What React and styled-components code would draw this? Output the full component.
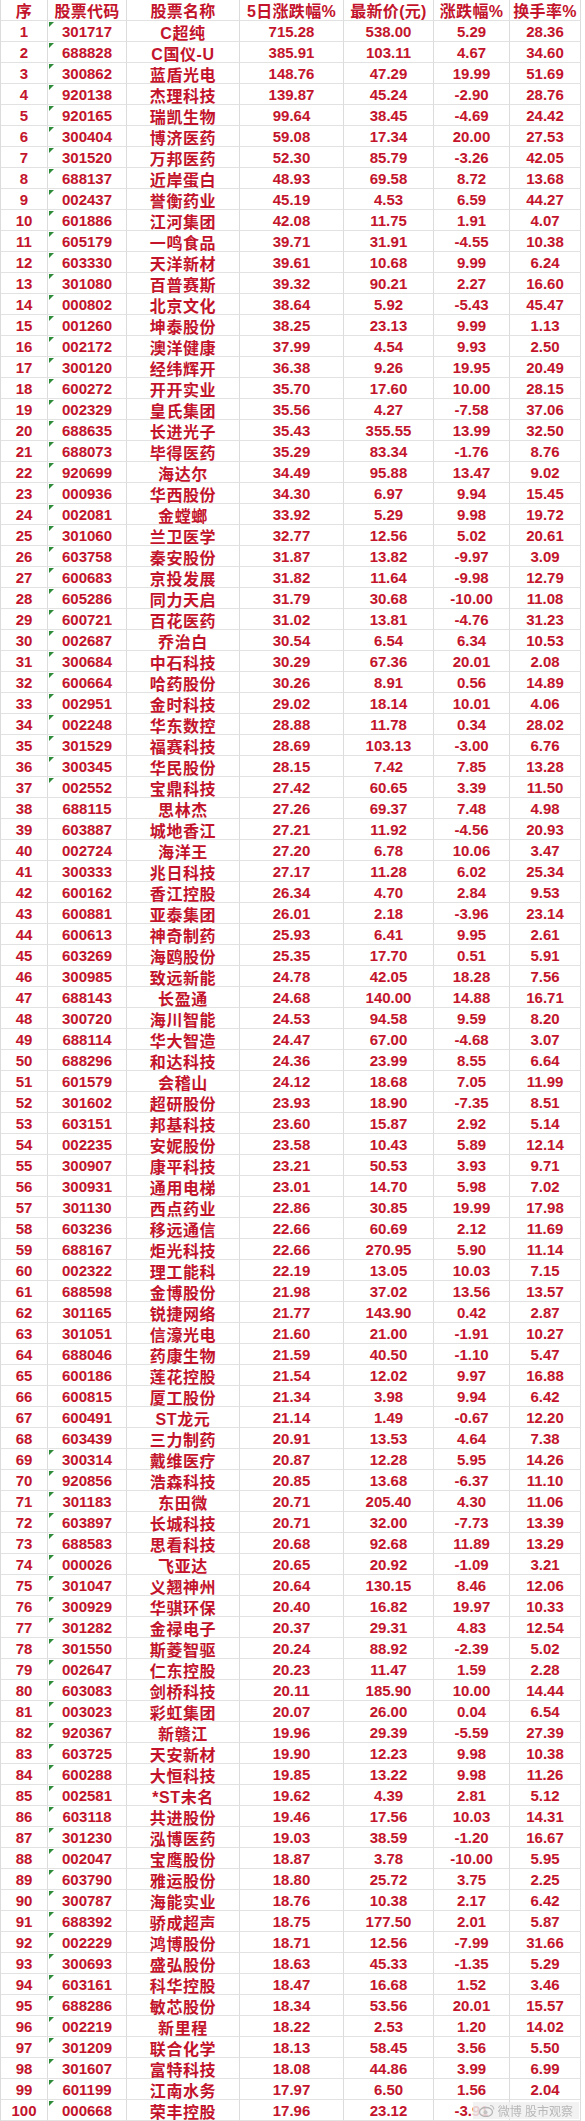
import React from "react";
import styled, { createGlobalStyle } from "styled-components";

const GlobalStyle = createGlobalStyle`
  html, body {
    margin: 0;
    padding: 0;
    background: #ffffff;
  }
`;

const raw = `1,301717,C超纯,715.28,538.00,5.29,28.36
2,688828,C国仪-U,385.91,103.11,4.67,34.60
3,300862,蓝盾光电,148.76,47.29,19.99,51.69
4,920138,杰理科技,139.87,45.24,-2.90,28.76
5,920165,瑞凯生物,99.64,38.45,-4.69,24.42
6,300404,博济医药,59.08,17.34,20.00,27.53
7,301520,万邦医药,52.30,85.79,-3.26,42.05
8,688137,近岸蛋白,48.93,69.58,8.72,13.68
9,002437,誉衡药业,45.19,4.53,6.59,44.27
10,601886,江河集团,42.08,11.75,1.91,4.07
11,605179,一鸣食品,39.71,31.91,-4.55,10.38
12,603330,天洋新材,39.61,10.68,9.99,6.24
13,301080,百普赛斯,39.32,90.21,2.27,16.60
14,000802,北京文化,38.64,5.92,-5.43,45.47
15,001260,坤泰股份,38.25,23.13,9.99,1.13
16,002172,澳洋健康,37.99,4.54,9.93,2.50
17,300120,经纬辉开,36.38,9.26,19.95,20.49
18,600272,开开实业,35.70,17.60,10.00,28.15
19,002329,皇氏集团,35.56,4.27,-7.58,37.06
20,688635,长进光子,35.43,355.55,13.99,32.50
21,688073,毕得医药,35.29,83.34,-1.76,8.76
22,920699,海达尔,34.49,95.88,13.47,9.02
23,000936,华西股份,34.30,6.97,9.94,15.45
24,002081,金螳螂,33.92,5.29,9.98,19.72
25,301060,兰卫医学,32.77,12.56,5.02,20.61
26,603758,秦安股份,31.87,13.82,-9.97,3.09
27,600683,京投发展,31.82,11.64,-9.98,12.79
28,605286,同力天启,31.79,30.68,-10.00,11.08
29,600721,百花医药,31.02,13.81,-4.76,31.23
30,002687,乔治白,30.54,6.54,6.34,10.53
31,300684,中石科技,30.29,67.36,20.01,2.08
32,600664,哈药股份,30.26,8.91,0.56,14.89
33,002951,金时科技,29.02,18.14,10.01,4.06
34,002248,华东数控,28.88,11.78,0.34,28.02
35,301529,福赛科技,28.69,103.13,-3.00,6.76
36,300345,华民股份,28.15,7.42,7.85,13.28
37,002552,宝鼎科技,27.42,60.65,3.39,11.50
38,688115,思林杰,27.26,69.37,7.48,4.98
39,603887,城地香江,27.21,11.92,-4.56,20.93
40,002724,海洋王,27.20,6.78,10.06,3.47
41,300333,兆日科技,27.17,11.28,6.02,25.34
42,600162,香江控股,26.34,4.70,2.84,9.53
43,600881,亚泰集团,26.01,2.18,-3.96,23.14
44,600613,神奇制药,25.93,6.41,9.95,2.61
45,603269,海鸥股份,25.35,17.70,0.51,5.91
46,300985,致远新能,24.78,42.05,18.28,7.56
47,688143,长盈通,24.68,140.00,14.88,16.71
48,300720,海川智能,24.53,94.58,9.59,8.20
49,688114,华大智造,24.47,67.00,-4.68,3.07
50,688296,和达科技,24.36,23.99,8.55,6.64
51,601579,会稽山,24.12,18.68,7.05,11.99
52,301602,超研股份,23.93,18.90,-7.35,8.51
53,603151,邦基科技,23.60,15.87,2.92,5.14
54,002235,安妮股份,23.58,10.43,5.89,12.14
55,300907,康平科技,23.21,50.53,3.93,9.71
56,300931,通用电梯,23.01,14.70,5.98,7.02
57,301130,西点药业,22.86,30.85,19.99,17.98
58,603236,移远通信,22.66,60.69,2.12,11.69
59,688167,炬光科技,22.66,270.95,5.90,11.14
60,002322,理工能科,22.19,13.05,10.03,7.15
61,688598,金博股份,21.98,37.02,13.56,13.57
62,301165,锐捷网络,21.77,143.90,0.42,2.87
63,301051,信濠光电,21.60,21.00,-1.91,10.27
64,688046,药康生物,21.59,40.50,-1.10,5.47
65,600186,莲花控股,21.54,12.02,9.97,16.88
66,600815,厦工股份,21.34,3.98,9.94,6.42
67,600491,ST龙元,21.14,1.49,-0.67,12.20
68,603439,三力制药,20.91,13.53,4.64,7.38
69,300314,戴维医疗,20.87,12.28,5.95,14.26
70,920856,浩森科技,20.85,13.68,-6.37,11.10
71,301183,东田微,20.71,205.40,4.30,11.06
72,603897,长城科技,20.71,32.00,-7.73,13.39
73,688583,思看科技,20.68,92.68,11.89,13.29
74,000026,飞亚达,20.65,20.92,-1.09,3.21
75,301047,义翘神州,20.64,130.15,8.46,12.06
76,300929,华骐环保,20.40,16.82,19.97,10.33
77,301282,金禄电子,20.37,29.31,4.83,12.54
78,301550,斯菱智驱,20.24,88.92,-2.39,5.02
79,002647,仁东控股,20.23,11.47,1.59,2.28
80,603083,剑桥科技,20.11,185.90,10.00,14.44
81,003023,彩虹集团,20.07,26.00,0.04,6.54
82,920367,新赣江,19.96,29.39,-5.59,27.39
83,603725,天安新材,19.90,12.23,9.98,10.38
84,600288,大恒科技,19.85,13.22,9.98,11.26
85,002581,*ST未名,19.62,4.39,2.81,5.12
86,603118,共进股份,19.46,17.56,10.03,14.31
87,301230,泓博医药,19.03,38.59,-1.20,16.67
88,002047,宝鹰股份,18.87,3.78,-10.00,5.95
89,603790,雅运股份,18.80,25.72,3.75,2.25
90,300787,海能实业,18.76,10.38,2.17,6.42
91,688392,骄成超声,18.75,177.50,2.01,5.87
92,002229,鸿博股份,18.71,12.56,-7.99,31.66
93,300693,盛弘股份,18.63,45.33,-1.35,5.29
94,603161,科华控股,18.47,16.68,1.52,3.46
95,688286,敏芯股份,18.34,53.56,20.01,15.57
96,002219,新里程,18.22,2.53,1.20,14.02
97,301209,联合化学,18.13,58.45,3.56,5.50
98,301607,富特科技,18.08,44.86,3.99,6.99
99,601199,江南水务,17.97,6.50,1.56,2.04
100,000668,荣丰控股,17.96,23.12,-3.91,`;

const rows = raw.split("\n").map((line) => line.split(","));

const headers = ["序", "股票代码", "股票名称", "5日涨跌幅%", "最新价(元)", "涨跌幅%", "换手率%"];

// rows where excel shows the green "number stored as text" flag
const flagged = (n) => n <= 37 || n >= 69;

const RED = "#c3142c";
const cols = "47px 79px 113px 104px 90px 76px 71px";

const Page = styled.div`
  width: 585px;
  height: 2121px;
  background: #fff;
  overflow: hidden;
`;

const Sheet = styled.div`
  position: relative;
  width: 580px;
  border-left: 1px solid #dcdcdc;
`;

const Row = styled.div`
  display: grid;
  grid-template-columns: ${cols};
  height: 21px;
`;

const Cell = styled.div`
  position: relative;
  box-sizing: border-box;
  height: 21px;
  border-right: 1px solid #dcdcdc;
  border-bottom: 1px solid #e2e2e2;
  display: flex;
  align-items: center;
  justify-content: center;
  color: ${RED};
  font-family: "Liberation Sans", "Noto Sans CJK SC", sans-serif;
  font-weight: 700;
  font-size: ${(p) => (p.$name ? "16px" : "15px")};
  letter-spacing: ${(p) => (p.$name ? "0.6px" : "0")};
  padding-top: ${(p) => (p.$name ? "2px" : "0")};
  white-space: nowrap;
`;

const HeadCell = styled(Cell)`
  font-size: 16px;
  letter-spacing: 0.3px;
  padding-top: 0;
`;

const Flag = styled.span`
  position: absolute;
  top: 1px;
  left: 1px;
  width: 0;
  height: 0;
  border-top: 5px solid #2e8b3a;
  border-right: 5px solid transparent;
`;

const Watermark = styled.div`
  position: absolute;
  right: 2px;
  bottom: 2px;
  display: flex;
  align-items: center;
  gap: 3px;
  padding: 0 6px;
  height: 17px;
  background: rgba(240, 240, 240, 0.85);
  color: #b8b8b8;
  font-family: "Liberation Sans", "Noto Sans CJK SC", sans-serif;
  font-size: 12px;
  filter: blur(0.6px);
`;

function WeiboMark() {
  return (
    <svg width="16" height="13" viewBox="0 0 16 13">
      <ellipse cx="7" cy="8" rx="6.5" ry="4.5" fill="none" stroke="#b5b5b5" strokeWidth="1.3" />
      <circle cx="6.5" cy="8.3" r="2" fill="#c4c4c4" />
      <path d="M11 1.5a4 4 0 0 1 3.8 4" fill="none" stroke="#c2c2c2" strokeWidth="1.2" />
    </svg>
  );
}

export default function App() {
  return (
    <Page>
      <GlobalStyle />
      <Sheet>
        <Row>
          {headers.map((h) => (
            <HeadCell key={h}>{h}</HeadCell>
          ))}
        </Row>
        {rows.map((r) => (
          <Row key={r[0]}>
            <Cell>{r[0]}</Cell>
            <Cell>
              {flagged(Number(r[0])) && <Flag />}
              {r[1]}
            </Cell>
            <Cell $name>{r[2]}</Cell>
            <Cell>{r[3]}</Cell>
            <Cell>{r[4]}</Cell>
            <Cell>{r[5]}</Cell>
            <Cell>{r[6]}</Cell>
          </Row>
        ))}
        <Watermark>
          <WeiboMark />
          <span>微博 股市观察</span>
        </Watermark>
      </Sheet>
    </Page>
  );
}
